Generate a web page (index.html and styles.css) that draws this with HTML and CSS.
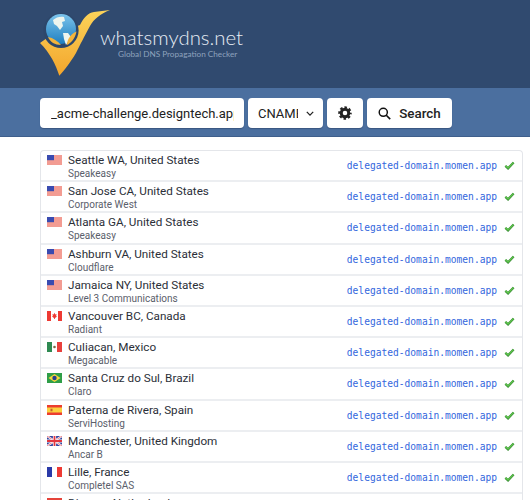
FILE: index.html
```html
<!DOCTYPE html>
<html lang="en">
<head>
    <meta charset="UTF-8">
    <meta name="viewport" content="width=device-width, initial-scale=1.0">
    <title>whatsmydns.net - Global DNS Propagation Checker</title>
    <link rel="stylesheet" href="styles.css">
</head>
<body>
<svg class="defs" width="0" height="0">
    <symbol id="flag-us" viewBox="0 0 15 10">
        <rect width="15" height="10" fill="#f6b4ac"/>
        <path d="M0 1h15M0 3h15M0 5h15M0 7h15M0 9h15" stroke="#ee7f74" stroke-width=".9"/>
        <rect width="7" height="5.2" fill="#3a4bb0"/>
    </symbol>
    <symbol id="flag-ca" viewBox="0 0 15 10">
        <rect width="15" height="10" fill="#fff"/>
        <rect width="4" height="10" fill="#ee3a33"/>
        <rect x="11" width="4" height="10" fill="#ee3a33"/>
        <path d="M7.5 1.8 8.3 3.4 9.6 3 9.1 5 10 5.4 8 7 7.9 8H7.1L7 7 5 5.4 5.9 5 5.4 3 6.7 3.4Z" fill="#ee3a33"/>
    </symbol>
    <symbol id="flag-mx" viewBox="0 0 15 10">
        <rect width="15" height="10" fill="#fff"/>
        <rect width="5" height="10" fill="#2f8a52"/>
        <rect x="10" width="5" height="10" fill="#e8403c"/>
        <circle cx="7.5" cy="5" r="1.3" fill="#7a6a45"/>
    </symbol>
    <symbol id="flag-br" viewBox="0 0 15 10">
        <rect width="15" height="10" fill="#2f9e48"/>
        <path d="M7.5 1 13.5 5 7.5 9 1.5 5Z" fill="#f5d63c"/>
        <circle cx="7.5" cy="5" r="2.2" fill="#25408f"/>
    </symbol>
    <symbol id="flag-es" viewBox="0 0 15 10">
        <rect width="15" height="10" fill="#ec3d30"/>
        <rect y="2.5" width="15" height="5" fill="#fbd13f"/>
        <rect x="3.5" y="3.7" width="2" height="2.6" fill="#c9602c"/>
    </symbol>
    <symbol id="flag-gb" viewBox="0 0 15 10">
        <rect width="15" height="10" fill="#34459f"/>
        <path d="M0 0 15 10M15 0 0 10" stroke="#fff" stroke-width="2"/>
        <path d="M0 0 15 10M15 0 0 10" stroke="#e2454f" stroke-width=".7"/>
        <path d="M7.5 0V10M0 5H15" stroke="#fff" stroke-width="3.2"/>
        <path d="M7.5 0V10M0 5H15" stroke="#e2353f" stroke-width="1.8"/>
    </symbol>
    <symbol id="flag-fr" viewBox="0 0 15 10">
        <rect width="15" height="10" fill="#fff"/>
        <rect width="5" height="10" fill="#2a3aa8"/>
        <rect x="10" width="5" height="10" fill="#ee3a33"/>
    </symbol>
    <symbol id="flag-nl" viewBox="0 0 15 10">
        <rect width="15" height="10" fill="#fff"/>
        <rect width="15" height="3.4" fill="#e5433a"/>
        <rect y="6.6" width="15" height="3.4" fill="#2a4fa0"/>
    </symbol>
    <symbol id="tick" viewBox="0 0 12 10">
        <path d="M1.4 5.4 4.4 8.2 10.6 1.6" fill="none" stroke="#3f8f3a" stroke-width="2.6"/>
        <path d="M1.6 5.3 4.4 7.9 10.4 1.7" fill="none" stroke="#5fcb4a" stroke-width="1.2"/>
    </symbol>
</svg>

<header class="site-header">
    <svg class="logo" viewBox="0 0 72 68" width="72" height="68">
        <defs>
            <linearGradient id="logoGold" x1="0" y1="0" x2="0" y2="1">
                <stop offset="0" stop-color="#fcd45a"/>
                <stop offset="1" stop-color="#f3a52c"/>
            </linearGradient>
            <linearGradient id="logoBlue" x1="0" y1="0" x2="0" y2="1">
                <stop offset="0" stop-color="#7cc4ec"/>
                <stop offset="1" stop-color="#1f7fc0"/>
            </linearGradient>
        </defs>
        <!-- tick behind the globe -->
        <path d="M0 34 7 29 40 16C44 8 48 4 54 3L70 1C60 5 54 10 50 17 44 28 40 36 36 44 30 54 24 62 19.3 66.7 16 56 10 44 0 34Z" fill="url(#logoGold)"/>
        <circle cx="21" cy="21.5" r="17.6" fill="#2d476b"/>
        <circle cx="21" cy="20" r="15" fill="url(#logoBlue)"/>
        <path d="M13 11C16 8 21 7 24 8L25 12 22 13 23 17 20 21 17 17 14 15Z" fill="#eef5ee"/>
        <path d="M23 24 28 24 31 28 28 33 26 36 24 30Z" fill="#eef5ee"/>
        <path d="M8 28C13 29 18 32 21 36 15 36 10 33 8 28Z" fill="#f5b43a"/>
        <path d="M36.5 22.5C35 30 31 34 27 36 27 30 31 25 36.5 22.5Z" fill="#f5b43a"/>
    </svg>
    <div class="brand">
        <div class="brand-name">whatsmydns.net</div>
        <div class="brand-tag">Global DNS Propagation Checker</div>
    </div>
</header>

<form class="search-bar">
    <input class="field host-field" type="text" value="_acme-challenge.designtech.app">
    <div class="field type-field">
        <span class="type-name">CNAME</span>
        <svg class="chevron" viewBox="0 0 10 6" width="8" height="5"><path d="M1 1 5 5 9 1" fill="none" stroke="#222" stroke-width="1.6"/></svg>
    </div>
    <button class="field gear-btn" type="button" aria-label="Settings">
        <svg viewBox="0 0 26 26" width="14" height="14">
            <circle cx="13" cy="13" r="7" fill="none" stroke="#222" stroke-width="5.5"/>
            <circle cx="13" cy="13" r="10.5" fill="none" stroke="#222" stroke-width="4" stroke-dasharray="4.6 3.65" stroke-dashoffset="2.3"/>
        </svg>
    </button>
    <button class="field search-btn" type="button">
        <svg viewBox="0 0 16 16" width="13" height="13"><circle cx="6.5" cy="6.5" r="5" fill="none" stroke="#111" stroke-width="1.8"/><path d="M10.2 10.2 15 15" stroke="#111" stroke-width="2"/></svg>
        <span>Search</span>
    </button>
</form>

<main class="results">
    <div class="row"><svg class="flag"><use href="#flag-us"/></svg><div class="place"><div class="city">Seattle WA, United States</div><div class="isp">Speakeasy</div></div><span class="answer">delegated-domain.momen.app</span><svg class="tick"><use href="#tick"/></svg></div>
    <div class="row"><svg class="flag"><use href="#flag-us"/></svg><div class="place"><div class="city">San Jose CA, United States</div><div class="isp">Corporate West</div></div><span class="answer">delegated-domain.momen.app</span><svg class="tick"><use href="#tick"/></svg></div>
    <div class="row"><svg class="flag"><use href="#flag-us"/></svg><div class="place"><div class="city">Atlanta GA, United States</div><div class="isp">Speakeasy</div></div><span class="answer">delegated-domain.momen.app</span><svg class="tick"><use href="#tick"/></svg></div>
    <div class="row"><svg class="flag"><use href="#flag-us"/></svg><div class="place"><div class="city">Ashburn VA, United States</div><div class="isp">Cloudflare</div></div><span class="answer">delegated-domain.momen.app</span><svg class="tick"><use href="#tick"/></svg></div>
    <div class="row"><svg class="flag"><use href="#flag-us"/></svg><div class="place"><div class="city">Jamaica NY, United States</div><div class="isp">Level 3 Communications</div></div><span class="answer">delegated-domain.momen.app</span><svg class="tick"><use href="#tick"/></svg></div>
    <div class="row"><svg class="flag"><use href="#flag-ca"/></svg><div class="place"><div class="city">Vancouver BC, Canada</div><div class="isp">Radiant</div></div><span class="answer">delegated-domain.momen.app</span><svg class="tick"><use href="#tick"/></svg></div>
    <div class="row"><svg class="flag"><use href="#flag-mx"/></svg><div class="place"><div class="city">Culiacan, Mexico</div><div class="isp">Megacable</div></div><span class="answer">delegated-domain.momen.app</span><svg class="tick"><use href="#tick"/></svg></div>
    <div class="row"><svg class="flag"><use href="#flag-br"/></svg><div class="place"><div class="city">Santa Cruz do Sul, Brazil</div><div class="isp">Claro</div></div><span class="answer">delegated-domain.momen.app</span><svg class="tick"><use href="#tick"/></svg></div>
    <div class="row"><svg class="flag"><use href="#flag-es"/></svg><div class="place"><div class="city">Paterna de Rivera, Spain</div><div class="isp">ServiHosting</div></div><span class="answer">delegated-domain.momen.app</span><svg class="tick"><use href="#tick"/></svg></div>
    <div class="row"><svg class="flag"><use href="#flag-gb"/></svg><div class="place"><div class="city">Manchester, United Kingdom</div><div class="isp">Ancar B</div></div><span class="answer">delegated-domain.momen.app</span><svg class="tick"><use href="#tick"/></svg></div>
    <div class="row"><svg class="flag"><use href="#flag-fr"/></svg><div class="place"><div class="city">Lille, France</div><div class="isp">Completel SAS</div></div><span class="answer">delegated-domain.momen.app</span><svg class="tick"><use href="#tick"/></svg></div>
    <div class="row"><svg class="flag"><use href="#flag-nl"/></svg><div class="place"><div class="city">Diemen, Netherlands</div></div></div>
</main>
</body>
</html>
```

FILE: styles.css
```css
html, body {
    height: 500px;
    overflow: hidden;
}
body {
    margin: 0;
    font-family: "Roboto", "Liberation Sans", sans-serif;
    background-color: #fff;
    color: #2b2f38;
}
.defs {
    display: block;
    height: 0;
}
.site-header {
    height: 88px;
    box-sizing: border-box;
    background-color: #304a6f;
    display: flex;
    align-items: flex-start;
    padding: 9px 0 0 40px;
}
.logo {
    flex: none;
}
.brand {
    margin: 17px 0 0 -12px;
    color: #e6ecf4;
}
.brand-name {
    font-family: "Lato", sans-serif;
    font-weight: 300;
    font-size: 20.4px;
    line-height: 23px;
}
.brand-tag {
    font-family: "Lato", sans-serif;
    font-size: 8.2px;
    line-height: 10px;
    margin-left: 18px;
    color: #8ea2bd;
}
.search-bar {
    height: 49px;
    box-sizing: border-box;
    background-color: #4b6f9f;
    border-bottom: 1px solid #3f5f8c;
    display: flex;
    gap: 4px;
    padding: 10px 0 0 40px;
}
.field {
    height: 30px;
    box-sizing: border-box;
    background-color: #fff;
    border: none;
    border-radius: 4px;
    box-shadow: 0 1px 1px #3a5680;
    font-family: "Roboto", "Liberation Sans", sans-serif;
    font-size: 13px;
    color: #222;
}
.host-field {
    width: 204px;
    padding: 0 10px 0 11px;
}
.type-field {
    width: 75px;
    display: flex;
    align-items: center;
    justify-content: space-between;
    padding: 0 9px 0 10px;
}
.type-name {
    width: 40px;
    overflow: hidden;
}
.gear-btn {
    width: 36px;
    padding: 0;
    display: flex;
    align-items: center;
    justify-content: center;
}
.search-btn {
    width: 85px;
    padding: 0;
    display: flex;
    align-items: center;
    justify-content: center;
    gap: 8px;
    font-size: 13.4px;
    font-weight: 500;
    color: #222;
}
.results {
    height: 350px;
    box-sizing: border-box;
    overflow: hidden;
    margin: 13px 7px 0 40px;
    border: 1px solid #e4e6ea;
    border-bottom: none;
    border-radius: 4px 4px 0 0;
}
.row {
    height: 31.2px;
    box-sizing: border-box;
    border-bottom: 2px solid #eceef1;
    display: flex;
    align-items: flex-start;
    padding-left: 6px;
}
.flag {
    flex: none;
    width: 15px;
    height: 10px;
    margin: 4px 6px 0 0;
}
.place {
    flex: 1;
    padding-top: 2px;
}
.city {
    font-size: 11.7px;
    line-height: 15px;
    color: #2b2f38;
}
.isp {
    font-size: 10px;
    line-height: 12px;
    color: #5b606b;
}
.answer {
    font-family: "DejaVu Sans Mono", monospace;
    font-size: 9.6px;
    line-height: 13px;
    margin-top: 8px;
    color: #3366dd;
}
.tick {
    flex: none;
    width: 11px;
    height: 9px;
    margin: 10px 7px 0 7px;
}
```
